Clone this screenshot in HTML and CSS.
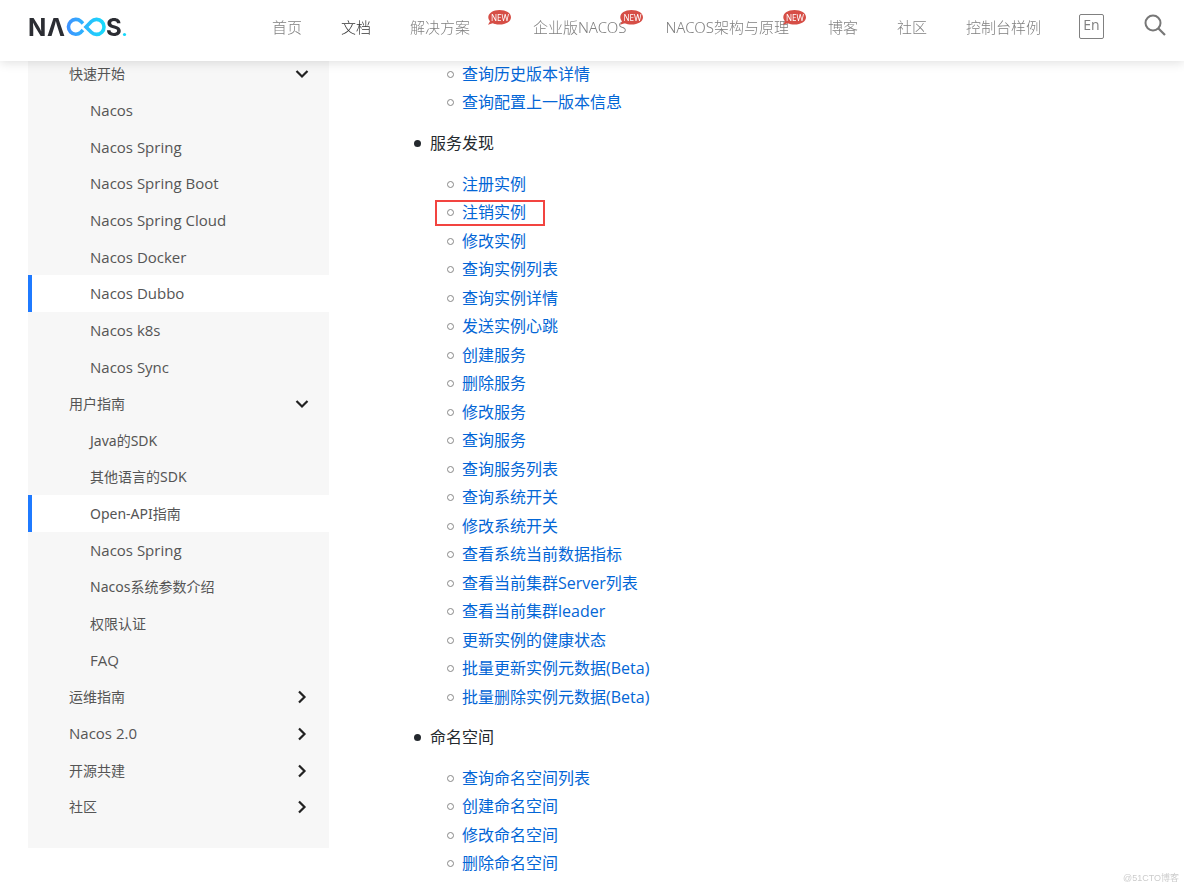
FILE: index.html
```html
<!DOCTYPE html>
<html lang="zh-CN">
<head>
<meta charset="utf-8">
<title>Nacos Open-API指南</title>
<link rel="stylesheet" href="styles.css">
</head>
<body>
<svg class="symbols" aria-hidden="true">
  <symbol id="chevron" viewBox="0 0 14 14"><path d="M4 1.500 9.500 7 4 12.500" fill="none" stroke="#222" stroke-width="2.200"/></symbol>
  <symbol id="bubble" viewBox="0 0 24 15"><path d="M11.500 0C18 0 23 3 23 7.200S18 14.500 11.500 14.500C9 14.500 6.500 14 4.700 13.200L0 14.800 2 11.200C.8 10 .3 8.700.3 7.200.3 3 5 0 11.500 0Z" fill="#d64e46"/></symbol>
</svg>
<header class="header">
  <a class="logo" href="#" aria-label="Nacos">
    <svg width="104" height="40" viewBox="-2 -8 104 40">
      <defs><linearGradient id="loop" gradientUnits="userSpaceOnUse" x1="37" y1="0" x2="78" y2="0"><stop offset="0" stop-color="#4090ff"/><stop offset="1" stop-color="#16e0fb"/></linearGradient></defs>
      <text class="logo-text" x="-1" y="20">N</text>
      <text class="logo-text" x="18" y="20">Λ</text>
      <path d="M54 7.500 51.800 5.300A7.400 7.400 0 1 0 51.800 16.300L54 14M57 11 62.300 5.500A7.500 7.500 0 1 1 62.300 16.300Z" fill="none" stroke="url(#loop)" stroke-width="3.600"/>
      <text class="logo-text" x="77" y="20">S</text>
      <circle cx="95.500" cy="18.500" r="1.600" fill="#16d8fb"/>
    </svg>
  </a>
  <nav class="nav">
    <a href="#">首页</a>
    <a class="current" href="#">文档</a>
    <a class="spaced" href="#">解决方案<span class="badge"><svg><use href="#bubble"/></svg><b>NEW</b></span></a>
    <a href="#">企业版NACOS<span class="badge"><svg><use href="#bubble"/></svg><b>NEW</b></span></a>
    <a href="#">NACOS架构与原理<span class="badge"><svg><use href="#bubble"/></svg><b>NEW</b></span></a>
    <a href="#">博客</a>
    <a href="#">社区</a>
    <a href="#">控制台样例</a>
  </nav>
  <button class="lang" type="button">En</button>
  <button class="search" type="button" aria-label="搜索"><svg width="22" height="22" viewBox="0 0 22 22"><circle cx="9" cy="9" r="7.500" fill="none" stroke="#777" stroke-width="2"/><path d="M14.500 14.500 21 21" stroke="#777" stroke-width="2.200"/></svg></button>
</header>
<div class="layout">
  <aside class="sidebar">
    <ul class="menu">
      <li><button type="button">快速开始<svg class="open"><use href="#chevron"/></svg></button></li>
      <li><a lang="en" href="#">Nacos</a></li>
      <li><a lang="en" href="#">Nacos Spring</a></li>
      <li><a lang="en" href="#">Nacos Spring Boot</a></li>
      <li><a lang="en" href="#">Nacos Spring Cloud</a></li>
      <li><a lang="en" href="#">Nacos Docker</a></li>
      <li><a lang="en" class="active" href="#">Nacos Dubbo</a></li>
      <li><a lang="en" href="#">Nacos k8s</a></li>
      <li><a lang="en" href="#">Nacos Sync</a></li>
      <li><button type="button">用户指南<svg class="open"><use href="#chevron"/></svg></button></li>
      <li><a href="#">Java的SDK</a></li>
      <li><a href="#">其他语言的SDK</a></li>
      <li><a class="active" href="#">Open-API指南</a></li>
      <li><a lang="en" href="#">Nacos Spring</a></li>
      <li><a href="#">Nacos系统参数介绍</a></li>
      <li><a href="#">权限认证</a></li>
      <li><a lang="en" href="#">FAQ</a></li>
      <li><button type="button">运维指南<svg><use href="#chevron"/></svg></button></li>
      <li><button lang="en" type="button">Nacos 2.0<svg><use href="#chevron"/></svg></button></li>
      <li><button type="button">开源共建<svg><use href="#chevron"/></svg></button></li>
      <li><button type="button">社区<svg><use href="#chevron"/></svg></button></li>
    </ul>
  </aside>
  <main class="content">
    <ul class="apis">
      <li><a href="#">查询历史版本详情</a></li>
      <li><a href="#">查询配置上一版本信息</a></li>
    </ul>
    <ul class="groups">
      <li>服务发现
        <ul class="apis">
          <li><a href="#">注册实例</a></li>
          <li class="marked"><a href="#">注销实例</a></li>
          <li><a href="#">修改实例</a></li>
          <li><a href="#">查询实例列表</a></li>
          <li><a href="#">查询实例详情</a></li>
          <li><a href="#">发送实例心跳</a></li>
          <li><a href="#">创建服务</a></li>
          <li><a href="#">删除服务</a></li>
          <li><a href="#">修改服务</a></li>
          <li><a href="#">查询服务</a></li>
          <li><a href="#">查询服务列表</a></li>
          <li><a href="#">查询系统开关</a></li>
          <li><a href="#">修改系统开关</a></li>
          <li><a href="#">查看系统当前数据指标</a></li>
          <li><a href="#">查看当前集群Server列表</a></li>
          <li><a href="#">查看当前集群leader</a></li>
          <li><a href="#">更新实例的健康状态</a></li>
          <li><a href="#">批量更新实例元数据(Beta)</a></li>
          <li><a href="#">批量删除实例元数据(Beta)</a></li>
        </ul>
      </li>
      <li>命名空间
        <ul class="apis">
          <li><a href="#">查询命名空间列表</a></li>
          <li><a href="#">创建命名空间</a></li>
          <li><a href="#">修改命名空间</a></li>
          <li><a href="#">删除命名空间</a></li>
        </ul>
      </li>
    </ul>
  </main>
</div>
<div class="watermark">@51CTO博客</div>
</body>
</html>
```
FILE: styles.css
```css
*, *::before, *::after { box-sizing: border-box; }
body {
  margin: 0;
  background: #fff;
  color: #24292e;
  font: 16px/28px "Open Sans", "Noto Sans CJK SC", sans-serif;
}
a { color: inherit; text-decoration: none; }
button { padding: 0; border: 0; background: none; color: inherit; font: inherit; cursor: pointer; }
ul { margin: 0; padding: 0; list-style: none; }
.symbols { display: none; }

.header {
  position: fixed;
  top: 0;
  left: 0;
  right: 0;
  z-index: 2;
  display: flex;
  align-items: flex-start;
  height: 61px;
  padding: 8px 18px 0 27px;
  background: #fff;
  box-shadow: 0 2px 10px rgba(0, 0, 0, 0.12);
  color: #808080;
}
.logo { display: flex; }
.logo-text { fill: #2b2d33; font: 700 24px Inter, sans-serif; }
.nav {
  display: flex;
  gap: 39px;
  margin: 5px 0 0 auto;
  font: 300 15px/28px "Noto Sans", "Noto Sans CJK SC", sans-serif;
}
.nav a { position: relative; white-space: nowrap; }
.nav .current { color: #333; }
.nav .spaced { padding-right: 24px; }
.badge { position: absolute; top: -3px; right: -18px; width: 24px; height: 15px; }
.badge svg { position: absolute; inset: 0; width: 24px; height: 15px; }
.badge b { position: absolute; inset: 0; color: #fff; font-size: 8px; line-height: 15px; text-align: center; }
.lang {
  width: 25px;
  height: 25px;
  margin: 6px 0 0 38px;
  padding-bottom: 3px;
  border: 1px solid #808080;
  border-radius: 2px;
  font-size: 14px;
  line-height: 20px;
}
.search { display: flex; margin: 6px 0 0 40px; }

.layout { display: flex; align-items: flex-start; padding-top: 55px; }
.sidebar { flex: 0 0 301px; margin-left: 28px; padding-bottom: 23px; background: #f7f7f7; }
.menu { color: #555; font: 14px/37px "Noto Sans", "Noto Sans CJK SC", sans-serif; }
.menu li:nth-child(3n) { line-height: 36px; }
.menu [lang="en"] { font-family: "Open Sans", sans-serif; font-size: 15px; }
.menu a { display: block; padding-left: 62px; }
.menu .active { padding-left: 58px; border-left: 4px solid #1f7aff; background: #fff; }
.menu button { display: flex; justify-content: space-between; align-items: center; width: 100%; padding: 0 20px 0 41px; }
.menu button svg { width: 14px; height: 14px; }
.menu .open { transform: rotate(90deg); }

.content { flex: 1; padding: 5px 28px 9px 101px; }
.groups > li { margin-top: 12px; line-height: 29px; }
.groups > li::before {
  content: "";
  display: inline-block;
  width: 7px;
  height: 7px;
  margin: 0 9px 2px -16px;
  border-radius: 50%;
  background: #24292e;
}
.apis { padding-left: 32px; }
.groups .apis { margin-top: 12px; }
.apis li { line-height: 28px; }
.apis li:nth-child(even) { line-height: 29px; }
.apis li::before {
  content: "";
  display: inline-block;
  width: 7px;
  height: 7px;
  margin: 0 8px 2px -15px;
  border: 1px solid #888;
  border-radius: 50%;
}
.apis a { color: #0366d6; }
.marked { position: relative; }
.marked::after {
  content: "";
  position: absolute;
  top: 2px;
  left: -27px;
  width: 110px;
  height: 26px;
  border: 2px solid #f24440;
  pointer-events: none;
}
.watermark {
  position: fixed;
  right: 5px;
  bottom: 2px;
  color: #ccc;
  font: 9px/14px "Liberation Sans", "Noto Sans CJK SC", sans-serif;
}
```
